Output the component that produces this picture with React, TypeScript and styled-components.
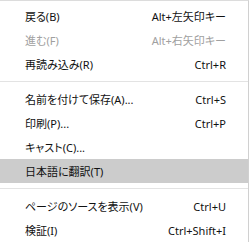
import React from 'react'
import styled, { createGlobalStyle } from 'styled-components'

const Global = createGlobalStyle`
  html, body {
    margin: 0;
    padding: 0;
    background: #fff;
  }
`

const Menu = styled.div`
  width: 249px;
  box-sizing: border-box;
  border-top: 1px solid #dcdcdc;
  border-right: 1px solid #d0d0d0;
  padding-top: 3px;
  display: flex;
  flex-direction: column;
  background: #fff;
  font-family: 'Noto Sans', 'Noto Sans CJK JP', sans-serif;
  font-size: 11px;
  font-feature-settings: 'palt';
`

const Item = styled.div<{ $active?: boolean; $disabled?: boolean }>`
  height: 24px;
  display: flex;
  align-items: center;
  justify-content: space-between;
  padding: 0 22px 0 25px;
  background: ${(p) => (p.$active ? '#cccccc' : 'transparent')};
  color: ${(p) => (p.$disabled ? '#a0a0a0' : '#111')};
`

const Label = styled.span`
  white-space: nowrap;
`

const Shortcut = styled.span`
  white-space: nowrap;
  color: inherit;
`

const Separator = styled.div`
  height: 1px;
  background: #e3e3e3;
  margin: 5px 0 5px;
`

type Entry =
  | { label: string; shortcut?: string; disabled?: boolean; active?: boolean }
  | 'sep'

const entries: Entry[] = [
  { label: '戻る(B)', shortcut: 'Alt+左矢印キー' },
  { label: '進む(F)', shortcut: 'Alt+右矢印キー', disabled: true },
  { label: '再読み込み(R)', shortcut: 'Ctrl+R' },
  'sep',
  { label: '名前を付けて保存(A)...', shortcut: 'Ctrl+S' },
  { label: '印刷(P)...', shortcut: 'Ctrl+P' },
  { label: 'キャスト(C)...' },
  { label: '日本語に翻訳(T)', active: true },
  'sep',
  { label: 'ページのソースを表示(V)', shortcut: 'Ctrl+U' },
  { label: '検証(I)', shortcut: 'Ctrl+Shift+I' },
]

export default function App() {
  return (
    <>
      <Global />
      <Menu>
        {entries.map((e, i) =>
          e === 'sep' ? (
            <Separator key={i} />
          ) : (
            <Item key={i} $active={e.active} $disabled={e.disabled}>
              <Label>{e.label}</Label>
              {e.shortcut && <Shortcut>{e.shortcut}</Shortcut>}
            </Item>
          )
        )}
      </Menu>
    </>
  )
}
